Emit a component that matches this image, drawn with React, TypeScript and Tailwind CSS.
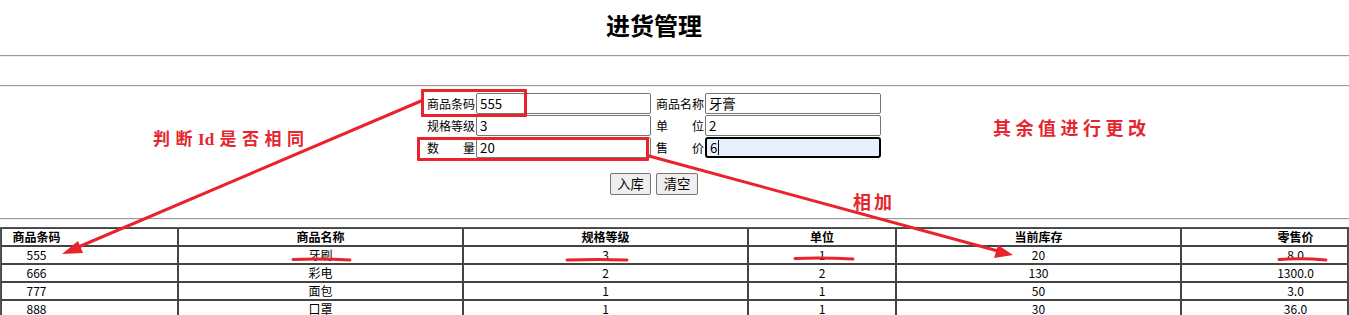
import React from 'react'

const ROWS = [
    { code: '555', name: '牙刷', spec: '3', unit: '1', stock: '20', price: '8.0' },
    { code: '666', name: '彩电', spec: '2', unit: '2', stock: '130', price: '1300.0' },
    { code: '777', name: '面包', spec: '1', unit: '1', stock: '50', price: '3.0' },
    { code: '888', name: '口罩', spec: '1', unit: '1', stock: '30', price: '36.0' },
]

const HEADERS = ['商品条码', '商品名称', '规格等级', '单位', '当前库存', '零售价']

const Hr = ({ className = '' }: { className?: string }) => (
    <div className={`h-[2px] w-full border-t border-b border-t-[#9a9a9a] border-b-[#eeeeee] ${className}`} />
)

const Label = ({ text, spread }: { text: string; spread?: boolean }) => (
    <div className={`flex w-[48px] items-center text-[12px] ${spread ? 'justify-between' : ''}`}>
        {spread ? text.split('').map((c, i) => <span key={i}>{c}</span>) : text}
    </div>
)

const Field = ({ value, focused, width }: { value: string; focused?: boolean; width: string }) => (
    <div
        className={`flex h-[21px] ${width} items-center px-[3px] text-[13.33px] ${
            focused
                ? 'rounded-[3px] border-2 border-black bg-[#e8f0fe] px-[2px]'
                : 'rounded-[2px] border border-[#767676] bg-white'
        }`}
    >
        <span>{value}</span>
        {focused && <span className="ml-[1px] h-[15px] w-[1px] bg-black" />}
    </div>
)

const cellPad = (i: number) => (i === 0 ? 'pr-[106px]' : i === 5 ? 'pl-[62px]' : '')

export default function App() {
    return (
        <div
            className="relative h-[315px] w-[1349px] overflow-hidden bg-white text-black"
            style={{ fontFamily: '"Noto Sans CJK SC", "Liberation Sans", sans-serif' }}
        >
            <div className="flex h-[55px] w-[1308px] items-center justify-center pb-[6px]">
                <h1 className="text-[24px] font-bold leading-none">进货管理</h1>
            </div>
            <Hr />
            <Hr className="mt-[28px]" />

            <div className="w-[1308px]">
                <div className="mx-auto mt-[6px] flex w-[454px] flex-col gap-[1px]">
                    <div className="flex h-[21px]">
                        <Label text="商品条码" />
                        <div className="w-[1px]" />
                        <Field value="555" width="w-[175px]" />
                        <div className="w-[5px]" />
                        <Label text="商品名称" />
                        <div className="w-[1px]" />
                        <Field value="牙膏" width="w-[176px]" />
                    </div>
                    <div className="flex h-[21px]">
                        <Label text="规格等级" />
                        <div className="w-[1px]" />
                        <Field value="3" width="w-[175px]" />
                        <div className="w-[5px]" />
                        <Label text="单位" spread />
                        <div className="w-[1px]" />
                        <Field value="2" width="w-[176px]" />
                    </div>
                    <div className="flex h-[21px]">
                        <Label text="数量" spread />
                        <div className="w-[1px]" />
                        <Field value="20" width="w-[175px]" />
                        <div className="w-[5px]" />
                        <Label text="售价" spread />
                        <div className="w-[1px]" />
                        <Field value="6" width="w-[176px]" focused />
                    </div>
                </div>

                <div className="mt-[15px] flex justify-center gap-[5px]">
                    <button className="h-[22px] w-[41px] rounded-[2px] border border-[#767676] bg-[#efefef] text-[13.33px]">
                        入库
                    </button>
                    <button className="h-[22px] w-[42px] rounded-[2px] border border-[#767676] bg-[#efefef] text-[13.33px]">
                        清空
                    </button>
                </div>
            </div>

            <Hr className="mt-[23px]" />

            <table className="mt-[7px] w-[1349px] table-fixed border-separate border-spacing-0 border border-[#555] text-[12px] leading-[16px]">
                <colgroup>
                    <col className="w-[177px]" />
                    <col className="w-[285px]" />
                    <col className="w-[285px]" />
                    <col className="w-[148px]" />
                    <col className="w-[285px]" />
                    <col className="w-[167px]" />
                </colgroup>
                <thead>
                    <tr>
                        {HEADERS.map((h, i) => (
                            <th key={h} className={`h-[18px] border border-[#444] p-0 text-center font-bold ${cellPad(i)}`}>
                                {h}
                            </th>
                        ))}
                    </tr>
                </thead>
                <tbody>
                    {ROWS.map((r) => (
                        <tr key={r.code}>
                            {[r.code, r.name, r.spec, r.unit, r.stock, r.price].map((v, i) => (
                                <td key={i} className={`h-[18px] border border-[#444] p-0 text-center ${cellPad(i)}`}>
                                    {v}
                                </td>
                            ))}
                        </tr>
                    ))}
                </tbody>
            </table>

            {/* annotations drawn on top of the screenshot */}
            <div className="absolute left-[421px] top-[89px] h-[28px] w-[106px] rounded-[1px] border-[3px] border-[#e8232b]" />
            <div className="absolute left-[417px] top-[137px] h-[24px] w-[232px] rounded-[1px] border-[3px] border-[#e8232b]" />

            <div className="absolute left-[153px] top-[126px] text-[17px] font-bold leading-[24px] tracking-[5.5px] text-[#e5262e]">
                判断
                <span className="tracking-[0px]" style={{ fontFamily: '"Liberation Serif", serif' }}>
                    I
                </span>
                <span style={{ fontFamily: '"Liberation Serif", serif' }}>d</span>是否相同
            </div>
            <div className="absolute left-[993px] top-[115px] text-[18px] font-bold leading-[24px] tracking-[4.5px] text-[#e5262e]">
                其余值进行更改
            </div>
            <div className="absolute left-[853px] top-[189px] text-[18px] font-bold leading-[24px] tracking-[3px] text-[#e5262e]">
                相加
            </div>

            <svg className="pointer-events-none absolute left-0 top-0" width="1349" height="315" viewBox="0 0 1349 315">
                <g stroke="#e8232b" strokeWidth="3" strokeLinecap="round" fill="none">
                    <line x1="421" y1="101" x2="76" y2="248" />
                    <line x1="649" y1="156" x2="998" y2="251" />
                    <path d="M293 259.5 Q322 258.5 350 260" />
                    <path d="M567 260 Q597 259 627 260" />
                    <path d="M795 258.5 Q824 257.5 853 259" />
                    <path d="M1279 259.5 Q1302 258 1326 260" />
                </g>
                <g fill="#e8232b">
                    <polygon points="62,254 78,241 83,253" />
                    <polygon points="1013,255 994,258 998,245" />
                </g>
            </svg>
        </div>
    )
}
